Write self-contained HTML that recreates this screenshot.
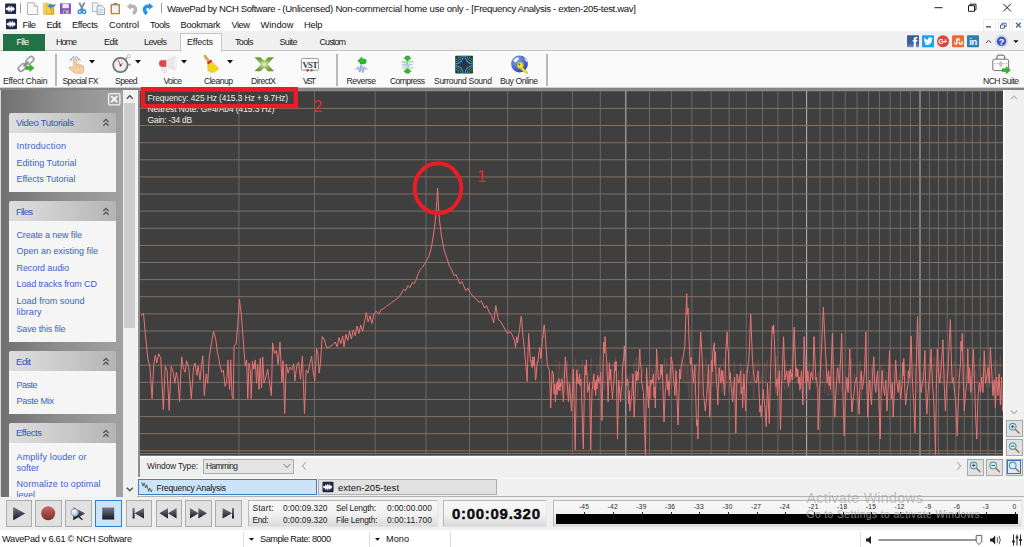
<!DOCTYPE html>
<html lang="en"><head><meta charset="utf-8"><title>WavePad</title>
<style>
html,body{margin:0;padding:0;overflow:hidden;}
body{width:1024px;height:547px;overflow:hidden;position:relative;background:#fff;font-family:"Liberation Sans",sans-serif;}
.a{position:absolute;}
.t{position:absolute;white-space:nowrap;}
svg{position:absolute;overflow:visible;}
.btn{position:absolute;background:#e1e1e1;border:1px solid #adadad;box-sizing:border-box;}
.grp{position:absolute;left:9px;width:107px;}
.gh{position:absolute;left:9px;width:107px;height:20px;background:linear-gradient(90deg,#dedede 0%,#cfcfcf 40%,#b4b4b4 100%);border-radius:2px 2px 0 0;}
.gb{position:absolute;left:9px;width:107px;background:#f5f5f5;}

</style></head>
<body>
<div class="a" style="left:0px;top:0px;width:1024px;height:31px;background:#ffffff;"></div><span id="t0" class="t" style="left:166.9px;top:2.00px;font-size:9.6px;line-height:13px;color:#111;font-family:'Liberation Sans',sans-serif;letter-spacing:-0.424px;">WavePad by NCH Software -</span><span id="t1" class="t" style="left:282.2px;top:2.00px;font-size:9.6px;line-height:13px;color:#111;font-family:'Liberation Sans',sans-serif;letter-spacing:-0.251px;">(Unlicensed) Non-commercial home use only -</span><span id="t2" class="t" style="left:471.3px;top:2.00px;font-size:9.6px;line-height:13px;color:#111;font-family:'Liberation Sans',sans-serif;letter-spacing:-0.335px;">[Frequency Analysis - exten-205-test.wav]</span><div class="a" style="left:20px;top:3px;width:1px;height:9.5px;background:#9c9c9c;"></div><div class="a" style="left:161.2px;top:3px;width:1px;height:9.5px;background:#9c9c9c;"></div><svg style="left:930px;top:0" width="94" height="18" viewBox="930 0 94 18"><g stroke="#1a1a1a" stroke-width="1" fill="none"><path d="M934.5 7.7h8"/><path d="M968.5 5.7h6v5.6h-6z M970 5.7v-1.5h6v5.6h-1.5"/><path d="M1003.3 3.8l7.6 7.6M1010.9 3.8l-7.6 7.6"/></g></svg><span id="t3" class="t" style="left:22.5px;top:19.00px;font-size:9.3px;line-height:13px;color:#111;font-family:'Liberation Sans',sans-serif;letter-spacing:-0.495px;">File</span><span id="t4" class="t" style="left:46.5px;top:19.00px;font-size:9.3px;line-height:13px;color:#111;font-family:'Liberation Sans',sans-serif;letter-spacing:-0.510px;">Edit</span><span id="t5" class="t" style="left:72.0px;top:19.00px;font-size:9.3px;line-height:13px;color:#111;font-family:'Liberation Sans',sans-serif;letter-spacing:-0.375px;">Effects</span><span id="t6" class="t" style="left:109.0px;top:19.00px;font-size:9.3px;line-height:13px;color:#111;font-family:'Liberation Sans',sans-serif;letter-spacing:0.003px;">Control</span><span id="t7" class="t" style="left:150.0px;top:19.00px;font-size:9.3px;line-height:13px;color:#111;font-family:'Liberation Sans',sans-serif;letter-spacing:-0.426px;">Tools</span><span id="t8" class="t" style="left:180.5px;top:19.00px;font-size:9.3px;line-height:13px;color:#111;font-family:'Liberation Sans',sans-serif;letter-spacing:-0.266px;">Bookmark</span><span id="t9" class="t" style="left:231.5px;top:19.00px;font-size:9.3px;line-height:13px;color:#111;font-family:'Liberation Sans',sans-serif;letter-spacing:-0.495px;">View</span><span id="t10" class="t" style="left:260.5px;top:19.00px;font-size:9.3px;line-height:13px;color:#111;font-family:'Liberation Sans',sans-serif;letter-spacing:-0.016px;">Window</span><span id="t11" class="t" style="left:304.0px;top:19.00px;font-size:9.3px;line-height:13px;color:#111;font-family:'Liberation Sans',sans-serif;letter-spacing:-0.208px;">Help</span><div class="a" style="left:983px;top:19px;width:12.5px;height:12.5px;background:#fff;border:1px solid #ececec;box-sizing:border-box;"></div><div class="a" style="left:997.5px;top:19px;width:12.5px;height:12.5px;background:#fff;border:1px solid #ececec;box-sizing:border-box;"></div><div class="a" style="left:1012px;top:19px;width:12.5px;height:12.5px;background:#fff;border:1px solid #ececec;box-sizing:border-box;"></div><svg style="left:980px;top:18px" width="44" height="14" viewBox="980 18 44 14"><g stroke="#4d6e94" fill="none"><path d="M986 26.8h5" stroke-width="1.6"/><path d="M1000.5 25h4v3.2h-4z M1002 25v-1.8h4.2v3.4h-1.7" stroke-width="1"/><path d="M1016 22.7l4.8 4.8M1020.8 22.7l-4.8 4.8" stroke-width="1.5"/></g></svg><div class="a" style="left:0px;top:31px;width:1024px;height:19.5px;background:#f0f0f0;"></div><div class="a" style="left:0px;top:50px;width:1024px;height:1px;background:#c6c6c6;"></div><div class="a" style="left:0px;top:51px;width:1024px;height:36.5px;background:#fafafa;"></div><div class="a" style="left:3px;top:33.5px;width:41.5px;height:17.5px;background:#217346;"></div><span id="t12" class="t" style="left:16.5px;top:36.00px;font-size:9px;line-height:13px;color:#ffffff;font-family:'Liberation Sans',sans-serif;letter-spacing:-0.672px;">File</span><div class="a" style="left:179.5px;top:33px;width:42.5px;height:18.5px;background:#fafafa;border:1px solid #c6c6c6;border-bottom:none;box-sizing:border-box;"></div><span id="t13" class="t" style="left:56.0px;top:36.00px;font-size:9px;line-height:13px;color:#1a1a1a;font-family:'Liberation Sans',sans-serif;letter-spacing:-1.005px;">Home</span><span id="t14" class="t" style="left:104.0px;top:36.00px;font-size:9px;line-height:13px;color:#1a1a1a;font-family:'Liberation Sans',sans-serif;letter-spacing:-0.505px;">Edit</span><span id="t15" class="t" style="left:144.0px;top:36.00px;font-size:9px;line-height:13px;color:#1a1a1a;font-family:'Liberation Sans',sans-serif;letter-spacing:-0.603px;">Levels</span><span id="t16" class="t" style="left:187.0px;top:36.00px;font-size:9px;line-height:13px;color:#1a1a1a;font-family:'Liberation Sans',sans-serif;letter-spacing:-0.227px;">Effects</span><span id="t17" class="t" style="left:235.0px;top:36.00px;font-size:9px;line-height:13px;color:#1a1a1a;font-family:'Liberation Sans',sans-serif;letter-spacing:-0.629px;">Tools</span><span id="t18" class="t" style="left:279.5px;top:36.00px;font-size:9px;line-height:13px;color:#1a1a1a;font-family:'Liberation Sans',sans-serif;letter-spacing:-0.629px;">Suite</span><span id="t19" class="t" style="left:319.5px;top:36.00px;font-size:9px;line-height:13px;color:#1a1a1a;font-family:'Liberation Sans',sans-serif;letter-spacing:-0.903px;">Custom</span><div class="a" style="left:54.5px;top:54px;width:2px;height:31.5px;background:#b9b9b9;"></div><div class="a" style="left:335.5px;top:54px;width:2px;height:31.5px;background:#b9b9b9;"></div><div class="a" style="left:545.5px;top:54px;width:2px;height:31.5px;background:#b9b9b9;"></div><span id="t20" class="t" style="left:3.0px;top:75.00px;font-size:8.6px;line-height:12px;color:#1e1e1e;font-family:'Liberation Sans',sans-serif;letter-spacing:-0.197px;">Effect Chain</span><span id="t21" class="t" style="left:62.5px;top:75.00px;font-size:8.6px;line-height:12px;color:#1e1e1e;font-family:'Liberation Sans',sans-serif;letter-spacing:-0.618px;">Special FX</span><span id="t22" class="t" style="left:115.0px;top:75.00px;font-size:8.6px;line-height:12px;color:#1e1e1e;font-family:'Liberation Sans',sans-serif;letter-spacing:-0.590px;">Speed</span><span id="t23" class="t" style="left:163.5px;top:75.00px;font-size:8.6px;line-height:12px;color:#1e1e1e;font-family:'Liberation Sans',sans-serif;letter-spacing:-0.633px;">Voice</span><span id="t24" class="t" style="left:204.0px;top:75.00px;font-size:8.6px;line-height:12px;color:#1e1e1e;font-family:'Liberation Sans',sans-serif;letter-spacing:-0.503px;">Cleanup</span><span id="t25" class="t" style="left:251.0px;top:75.00px;font-size:8.6px;line-height:12px;color:#1e1e1e;font-family:'Liberation Sans',sans-serif;letter-spacing:-0.531px;">DirectX</span><span id="t26" class="t" style="left:303.0px;top:75.00px;font-size:8.6px;line-height:12px;color:#1e1e1e;font-family:'Liberation Sans',sans-serif;letter-spacing:-1.859px;">VST</span><span id="t27" class="t" style="left:346.5px;top:75.00px;font-size:8.6px;line-height:12px;color:#1e1e1e;font-family:'Liberation Sans',sans-serif;letter-spacing:-0.417px;">Reverse</span><span id="t28" class="t" style="left:390.0px;top:75.00px;font-size:8.6px;line-height:12px;color:#1e1e1e;font-family:'Liberation Sans',sans-serif;letter-spacing:-0.596px;">Compress</span><span id="t29" class="t" style="left:434.0px;top:75.00px;font-size:8.6px;line-height:12px;color:#1e1e1e;font-family:'Liberation Sans',sans-serif;letter-spacing:-0.353px;">Surround Sound</span><span id="t30" class="t" style="left:500.0px;top:75.00px;font-size:8.6px;line-height:12px;color:#1e1e1e;font-family:'Liberation Sans',sans-serif;letter-spacing:-0.450px;">Buy Online</span><span id="t31" class="t" style="left:983.0px;top:75.00px;font-size:8.6px;line-height:12px;color:#1e1e1e;font-family:'Liberation Sans',sans-serif;letter-spacing:-0.574px;">NCH Suite</span><svg style="left:89px;top:60.3px" width="6" height="4" viewBox="0 0 6 4"><path d="M0 0h6l-3 3.4z" fill="#111"/></svg><svg style="left:135px;top:60.3px" width="6" height="4" viewBox="0 0 6 4"><path d="M0 0h6l-3 3.4z" fill="#111"/></svg><svg style="left:181px;top:60.3px" width="6" height="4" viewBox="0 0 6 4"><path d="M0 0h6l-3 3.4z" fill="#111"/></svg><svg style="left:226.5px;top:60.3px" width="6" height="4" viewBox="0 0 6 4"><path d="M0 0h6l-3 3.4z" fill="#111"/></svg><div class="a" style="left:0px;top:87.4px;width:1024px;height:1px;background:#cfcfcf;"></div><div class="a" style="left:0px;top:88.2px;width:1024px;height:1.9px;background:#858585;"></div><div class="a" style="left:0px;top:90px;width:123.5px;height:406.5px;background:#888;background:linear-gradient(90deg,#6f6f6f 0%,#8c8c8c 45%,#a2a2a2 100%);"></div><div class="a" style="left:0px;top:90px;width:1.2px;height:406.5px;background:#d8d8d8;"></div><svg style="left:107px;top:92px" width="15" height="15" viewBox="107 92 15 15"><rect x="108.6" y="93.6" width="11.3" height="11.3" rx="1.2" fill="#a4a4a4" stroke="#f2f2f2" stroke-width="1.3"/><path d="M111.2 96.2l6 6M117.2 96.2l-6 6" stroke="#fff" stroke-width="1.7"/></svg><div class="a" style="left:123px;top:90px;width:13.8px;height:406.5px;background:#f0f0f0;"></div><div class="a" style="left:124.3px;top:103px;width:11.1px;height:224.5px;background:#cdcdcd;"></div><svg style="left:123px;top:89px" width="14" height="408" viewBox="123 89 14 408"><g stroke="#505050" stroke-width="1.3" fill="none"><path d="M126.8 98.7l3-3 3 3"/><path d="M126.8 487.8l3 3 3-3"/></g></svg><div class="a" style="left:136.7px;top:90px;width:1.3px;height:387.5px;background:#f6f6f6;"></div><div class="a" style="left:137.9px;top:88.2px;width:2.1px;height:389.3px;background:#8c8c8c;"></div><div class="gh" style="top:112.8px"></div><div class="gb" style="top:132.8px;height:59.2px"></div><span id="t32" class="t" style="left:16.0px;top:116.00px;font-size:9.6px;line-height:13px;color:#3458c0;font-family:'Liberation Sans',sans-serif;letter-spacing:-0.378px;">Video Tutorials</span><svg style="left:101.5px;top:118.3px" width="8" height="9" viewBox="0 0 8 9"><path d="M1.400 4l2.600-2.600 2.600 2.600M1.400 7.700l2.600-2.600 2.600 2.600" stroke="#505050" stroke-width="1.250" fill="none"/></svg><span id="t33" class="t" style="left:16.5px;top:140.00px;font-size:9px;line-height:13px;color:#3a5fc8;font-family:'Liberation Sans',sans-serif;letter-spacing:0.224px;">Introduction</span><span id="t34" class="t" style="left:16.5px;top:157.00px;font-size:9px;line-height:13px;color:#3a5fc8;font-family:'Liberation Sans',sans-serif;letter-spacing:0.030px;">Editing Tutorial</span><span id="t35" class="t" style="left:16.5px;top:173.00px;font-size:9px;line-height:13px;color:#3a5fc8;font-family:'Liberation Sans',sans-serif;letter-spacing:-0.025px;">Effects Tutorial</span><div class="gh" style="top:201.3px"></div><div class="gb" style="top:221.3px;height:120.5px"></div><span id="t36" class="t" style="left:16.0px;top:205.00px;font-size:9.6px;line-height:13px;color:#3458c0;font-family:'Liberation Sans',sans-serif;letter-spacing:-0.816px;">Files</span><svg style="left:101.5px;top:206.8px" width="8" height="9" viewBox="0 0 8 9"><path d="M1.400 4l2.600-2.600 2.600 2.600M1.400 7.700l2.600-2.600 2.600 2.600" stroke="#505050" stroke-width="1.250" fill="none"/></svg><span id="t37" class="t" style="left:16.5px;top:229.00px;font-size:9px;line-height:13px;color:#3a5fc8;font-family:'Liberation Sans',sans-serif;letter-spacing:-0.128px;">Create a new file</span><span id="t38" class="t" style="left:16.5px;top:245.00px;font-size:9px;line-height:13px;color:#3a5fc8;font-family:'Liberation Sans',sans-serif;letter-spacing:-0.003px;">Open an existing file</span><span id="t39" class="t" style="left:16.5px;top:262.00px;font-size:9px;line-height:13px;color:#3a5fc8;font-family:'Liberation Sans',sans-serif;letter-spacing:-0.095px;">Record audio</span><span id="t40" class="t" style="left:16.5px;top:278.00px;font-size:9px;line-height:13px;color:#3a5fc8;font-family:'Liberation Sans',sans-serif;letter-spacing:-0.113px;">Load tracks from CD</span><span id="t41" class="t" style="left:16.5px;top:295.00px;font-size:9px;line-height:13px;color:#3a5fc8;font-family:'Liberation Sans',sans-serif;letter-spacing:0.032px;">Load from sound</span><span id="t42" class="t" style="left:16.5px;top:306.00px;font-size:9px;line-height:13px;color:#3a5fc8;font-family:'Liberation Sans',sans-serif;letter-spacing:0.081px;">library</span><span id="t43" class="t" style="left:16.5px;top:323.00px;font-size:9px;line-height:13px;color:#3a5fc8;font-family:'Liberation Sans',sans-serif;letter-spacing:-0.156px;">Save this file</span><div class="gh" style="top:351.3px"></div><div class="gb" style="top:371.3px;height:42.6px"></div><span id="t44" class="t" style="left:16.0px;top:355.00px;font-size:9.6px;line-height:13px;color:#3458c0;font-family:'Liberation Sans',sans-serif;letter-spacing:-0.516px;">Edit</span><svg style="left:101.5px;top:356.8px" width="8" height="9" viewBox="0 0 8 9"><path d="M1.400 4l2.600-2.600 2.600 2.600M1.400 7.700l2.600-2.600 2.600 2.600" stroke="#505050" stroke-width="1.250" fill="none"/></svg><span id="t45" class="t" style="left:16.5px;top:379.00px;font-size:9px;line-height:13px;color:#3a5fc8;font-family:'Liberation Sans',sans-serif;letter-spacing:-0.504px;">Paste</span><span id="t46" class="t" style="left:16.5px;top:395.00px;font-size:9px;line-height:13px;color:#3a5fc8;font-family:'Liberation Sans',sans-serif;letter-spacing:-0.252px;">Paste Mix</span><div class="gh" style="top:423px"></div><div class="gb" style="top:443px;height:53.5px"></div><span id="t47" class="t" style="left:16.0px;top:426.00px;font-size:9.6px;line-height:13px;color:#3458c0;font-family:'Liberation Sans',sans-serif;letter-spacing:-0.526px;">Effects</span><svg style="left:101.5px;top:428.5px" width="8" height="9" viewBox="0 0 8 9"><path d="M1.400 4l2.600-2.600 2.600 2.600M1.400 7.700l2.600-2.600 2.600 2.600" stroke="#505050" stroke-width="1.250" fill="none"/></svg><span id="t48" class="t" style="left:16.5px;top:451.00px;font-size:9px;line-height:13px;color:#3a5fc8;font-family:'Liberation Sans',sans-serif;letter-spacing:0.154px;">Amplify louder or</span><span id="t49" class="t" style="left:16.5px;top:462.00px;font-size:9px;line-height:13px;color:#3a5fc8;font-family:'Liberation Sans',sans-serif;letter-spacing:-0.003px;">softer</span><span id="t50" class="t" style="left:16.5px;top:478.00px;font-size:9px;line-height:13px;color:#3a5fc8;font-family:'Liberation Sans',sans-serif;letter-spacing:0.104px;">Normalize to optimal</span><div class="a" style="left:9px;top:489px;width:107px;height:7.5px;overflow:hidden"><span id="t51" class="t" style="left:7.5px;top:0.00px;font-size:9px;line-height:13px;color:#3a5fc8;font-family:'Liberation Sans',sans-serif;letter-spacing:0.000px;">level</span></div><svg style="left:0;top:0" width="1024" height="547" viewBox="0 0 1024 547"><rect x="140" y="90" width="863" height="1.2" fill="#8e8e8e"/><rect x="140" y="91.1" width="863" height="364.6" fill="#3f3f3f"/><path d="M238.9 91.1V455.7M314.5 91.1V455.7M375.2 91.1V455.7M426.0 91.1V455.7M469.5 91.1V455.7M507.7 91.1V455.7M541.7 91.1V455.7M572.4 91.1V455.7M600.3 91.1V455.7M649.5 91.1V455.7M671.4 91.1V455.7M691.9 91.1V455.7M711.1 91.1V455.7M729.2 91.1V455.7M746.3 91.1V455.7M762.5 91.1V455.7M777.9 91.1V455.7M792.6 91.1V455.7M820.0 91.1V455.7M832.9 91.1V455.7M845.2 91.1V455.7M857.1 91.1V455.7M868.5 91.1V455.7M879.5 91.1V455.7M890.1 91.1V455.7M900.4 91.1V455.7M910.4 91.1V455.7M929.4 91.1V455.7M938.5 91.1V455.7M947.3 91.1V455.7M955.9 91.1V455.7M964.2 91.1V455.7M972.3 91.1V455.7M980.3 91.1V455.7M988.0 91.1V455.7M995.5 91.1V455.7" stroke="#696969" stroke-width="1" fill="none"/><path d="M625.8 91.1V455.7M806.6 91.1V455.7M920.0 91.1V455.7" stroke="#b0b0b0" stroke-width="1.1" fill="none"/><path d="M140 108.4H1003M140 125.5H1003M140 142.7H1003M140 159.8H1003M140 176.9H1003M140 194.0H1003M140 211.1H1003M140 228.3H1003M140 245.4H1003M140 262.5H1003M140 279.6H1003M140 296.7H1003M140 313.9H1003M140 331.0H1003M140 348.1H1003M140 365.2H1003M140 382.3H1003M140 399.5H1003M140 416.6H1003M140 433.7H1003M140 450.8H1003M140 453.5H1003" stroke="#84705f" stroke-width="1" fill="none"/><path d="M556.0,359.6 L557.7,392.0 L559.2,360.8 L561.0,395.8 L562.5,367.1 L563.7,378.1 L565.1,368.9 L566.2,395.5 L567.4,361.1 L568.4,399.9 L570.2,375.3 L571.8,378.7 L573.1,366.9 L574.2,398.9 L575.6,359.4 L577.4,380.7 L579.3,366.0 L580.9,385.5 L582.4,360.1 L583.4,397.0 L584.6,373.2 L585.9,399.3 L587.7,372.6 L589.5,390.8 L591.2,358.7 L592.7,396.2 L593.9,376.3 L595.8,387.0 L597.2,365.9 L598.6,399.9 L599.9,356.6 L601.0,393.8 L603.0,366.9 L604.5,390.1 L606.3,360.9 L607.9,390.2 L609.5,360.0 L610.7,385.7 L612.6,363.6 L614.2,384.7 L615.3,357.4 L617.1,395.1 L618.5,371.0 L620.2,397.8 L622.1,365.0 L624.1,399.2 L625.7,375.4 L627.2,386.3 L628.4,375.3 L629.6,379.5 L631.4,373.0 L632.9,396.4 L633.9,361.7 L635.2,387.2 L636.4,357.5 L637.7,397.8 L639.7,372.4 L641.2,383.5 L643.2,367.6 L644.9,378.6 L646.1,374.4 L647.9,397.4 L649.5,365.4 L651.1,396.7 L652.4,367.8 L653.7,394.9 L654.7,371.1 L656.6,378.5 L658.2,370.2 L660.1,390.9 L661.3,364.9 L663.3,397.9 L664.4,358.1 L665.5,378.6 L667.0,359.1 L668.8,392.4 L670.0,367.9 L671.3,388.9 L672.5,359.7 L673.7,386.3 L675.4,368.1 L676.4,393.6 L678.3,373.0 L680.1,378.2 L681.6,357.4 L683.3,381.9 L685.0,361.6 L686.7,384.9 L687.8,364.6 L689.1,397.8 L690.4,367.1 L691.9,398.9 L693.0,369.2 L694.5,394.2 L696.5,362.8 L698.2,389.6 L699.8,357.4 L701.6,399.5 L702.9,363.0 L704.9,380.4 L706.0,357.6 L707.8,394.7 L709.3,369.7 L710.3,392.2 L711.7,367.4 L713.1,386.8 L714.4,357.1 L715.8,383.4 L717.5,374.0 L719.2,388.0 L720.5,364.5 L721.9,391.9 L723.9,357.9 L725.4,388.8 L727.1,375.6 L728.9,391.8 L730.6,370.7 L732.5,393.4 L734.2,361.4 L736.1,386.5 L737.7,374.1 L739.7,399.8 L740.7,362.9 L742.0,386.6 L743.1,368.2 L744.2,384.7 L746.2,372.3 L747.6,380.4 L749.6,371.5 L750.8,385.4 L752.4,371.0 L753.7,398.9 L755.0,361.6 L756.9,381.4 L758.5,360.4 L760.1,384.1 L761.5,376.7 L763.0,387.6 L764.6,362.2 L765.8,386.5 L767.0,360.1 L769.0,378.8 L770.8,376.6 L772.5,378.4 L774.0,356.9 L775.6,393.4 L776.9,356.2 L778.4,380.1 L779.7,366.0 L781.6,386.1 L782.7,373.4 L784.6,389.6 L785.6,360.1 L787.0,390.1 L788.2,373.7 L790.1,398.4 L792.0,356.4 L793.6,379.8 L795.5,372.4 L797.2,382.1 L798.3,373.9 L799.9,391.6 L801.4,373.6 L802.7,383.9 L804.0,362.6 L805.7,397.6 L806.7,357.5 L808.3,392.9 L809.4,361.9 L810.5,378.8 L812.0,371.0 L813.7,381.5 L814.8,376.5 L816.3,387.0 L818.0,372.0 L819.5,379.7 L821.3,360.7 L822.4,385.8 L823.9,369.8 L825.1,393.6 L826.6,359.6 L828.4,395.7 L830.3,370.9 L831.6,395.1 L833.5,367.7 L835.4,399.3 L836.8,376.7 L838.7,395.5 L839.7,363.7 L841.3,391.4 L843.1,370.2 L844.2,398.5 L845.8,375.4 L847.0,400.0 L848.5,373.1 L850.3,397.4 L851.6,357.8 L853.0,381.9 L854.6,373.9 L855.9,380.9 L857.0,365.3 L858.5,378.6 L860.2,360.6 L861.3,398.4 L862.8,375.7 L864.4,380.7 L865.6,365.3 L867.2,395.0 L869.0,370.3 L870.2,387.5 L871.6,366.8 L872.9,389.8 L874.3,356.8 L876.2,390.9 L878.0,372.2 L879.7,399.9 L881.1,364.7 L882.1,392.6 L883.7,368.7 L885.7,382.3 L886.9,372.2 L888.7,388.6 L889.8,364.1 L891.6,389.0 L893.0,364.6 L894.7,391.2 L896.4,375.0 L898.1,386.2 L899.4,373.2 L901.2,398.4 L902.4,374.6 L904.2,379.7 L905.6,369.9 L906.7,396.3 L908.0,371.0 L909.3,382.8 L910.5,366.9 L912.2,382.8 L913.9,363.4 L915.5,386.1 L916.7,359.1 L917.8,393.3 L919.2,358.7 L921.1,392.4 L922.1,371.9 L923.7,387.8 L925.2,377.2 L926.6,392.0 L928.2,364.0 L929.5,394.6 L931.2,366.1 L932.7,382.9 L934.5,356.4 L936.1,388.0 L937.3,368.9 L938.9,379.9 L940.4,359.6 L942.2,385.2 L943.5,360.7 L944.6,382.1 L945.7,369.7 L947.6,382.9 L948.7,367.8 L949.8,386.9 L951.6,360.5 L953.3,389.9 L954.4,361.3 L956.0,380.1 L957.2,368.7 L959.0,389.4 L960.6,356.2 L961.9,385.0 L963.9,363.9 L965.6,378.8 L967.1,375.6 L968.9,390.8 L970.1,376.4 L971.2,399.2 L973.0,371.8 L974.5,381.6 L975.8,370.6 L977.5,386.6 L979.3,357.2 L980.6,380.0 L981.9,373.4 L983.6,381.3 L985.0,358.5 L986.6,387.7 L987.9,364.2 L989.7,387.4 L991.4,369.8 L992.9,390.2 L994.2,360.4 L995.7,384.7 L997.1,360.1 L999.0,387.4 L1000.2,356.7 L1001.4,397.1" stroke="#e87474" stroke-width="0.8" fill="none" opacity="0.22"/><path d="M141.0,315.5 L143.5,313.3 L145.3,333.5 L147.8,358.3 L150.0,367.6 L152.1,398.7 L153.7,364.5 L155.3,355.2 L156.8,363.0 L158.7,353.7 L160.8,358.3 L163.3,409.6 L165.2,366.1 L167.1,370.7 L169.2,410.5 L171.1,366.1 L173.3,372.3 L174.8,383.2 L176.4,372.3 L177.9,380.1 L179.5,401.8 L181.7,356.8 L183.2,367.6 L185.1,372.3 L186.6,360.8 L188.8,367.6 L191.3,398.7 L193.5,367.6 L195.0,363.0 L196.9,375.4 L198.1,366.1 L200.0,380.1 L201.5,364.5 L202.8,355.8 L204.3,395.6 L206.2,373.9 L207.7,383.2 L209.3,356.8 L211.5,342.8 L213.6,331.3 L215.8,339.7 L217.4,352.1 L219.9,364.5 L221.7,372.3 L223.3,370.1 L225.1,386.3 L226.7,381.6 L227.9,359.9 L229.5,389.4 L230.7,359.9 L232.0,395.6 L233.2,398.7 L234.1,345.9 L236.0,344.3 L237.6,327.3 L239.4,299.3 L241.0,311.7 L242.5,330.4 L244.1,352.1 L245.3,366.1 L246.6,359.9 L247.8,398.7 L249.0,363.0 L250.3,370.7 L251.2,398.7 L252.5,361.4 L254.0,369.2 L255.3,359.9 L256.5,383.2 L257.7,364.5 L259.0,389.4 L260.2,358.3 L261.5,387.8 L262.7,356.8 L264.0,383.2 L265.8,377.0 L267.7,369.2 L269.5,383.2 L271.4,395.6 L272.6,342.8 L274.5,353.7 L276.4,350.6 L278.2,364.5 L280.0,342.1 L281.9,382.5 L283.1,360.7 L284.7,413.5 L286.2,363.9 L288.1,373.2 L289.9,367.0 L291.8,370.1 L293.7,363.9 L294.9,380.9 L296.8,365.4 L298.6,362.3 L300.5,379.4 L302.4,356.1 L304.5,413.5 L306.1,370.1 L308.0,373.2 L309.8,363.9 L311.7,356.1 L312.9,370.1 L314.8,380.9 L316.6,348.3 L317.9,354.5 L319.1,373.2 L320.4,363.9 L322.2,336.5 L324.1,339.0 L326.6,347.7 L329.7,346.8 L332.8,344.6 L335.3,342.1 L337.1,346.8 L339.0,337.5 L340.9,343.7 L342.7,335.9 L344.0,346.8 L345.8,334.3 L347.7,340.6 L349.6,331.2 L351.4,339.0 L353.3,329.7 L355.2,335.9 L357.0,326.0 L358.9,333.4 L360.7,325.0 L362.6,331.2 L364.5,321.9 L366.3,312.6 L368.2,321.9 L370.1,315.7 L371.9,323.5 L373.8,314.2 L376.3,311.1 L378.8,314.2 L381.2,309.5 L383.7,308.6 L386.2,306.4 L388.7,304.8 L391.8,302.4 L394.9,300.2 L398.0,298.0 L401.1,294.0 L403.6,289.3 L405.5,290.9 L408.0,285.6 L409.8,287.8 L412.3,282.5 L414.2,283.7 L416.0,280.0 L418.0,274.3 L420.2,269.3 L422.6,267.1 L425.8,261.9 L428.9,256.3 L430.7,250.1 L432.0,243.9 L433.2,236.1 L434.4,228.3 L435.4,219.0 L436.0,212.8 L436.9,200.4 L437.6,188.0 L438.1,200.0 L439.3,218.6 L441.2,234.2 L444.0,249.7 L447.1,259.0 L449.3,265.8 L451.7,269.9 L454.2,275.8 L456.1,274.5 L458.0,279.2 L459.8,283.9 L461.7,281.4 L464.2,287.0 L466.0,290.7 L467.9,288.2 L470.4,293.2 L473.5,296.9 L476.6,299.4 L479.1,302.5 L480.9,300.6 L482.8,304.0 L484.7,308.1 L486.5,305.6 L489.0,311.8 L491.5,315.5 L493.7,322.7 L495.8,305.6 L498.3,319.6 L500.8,321.7 L503.0,325.8 L505.2,329.8 L507.6,333.5 L510.1,331.7 L512.3,335.1 L514.5,340.4 L515.6,347.5 L516.7,336.6 L517.6,342.8 L518.7,333.5 L519.5,331.2 L520.4,321.2 L521.2,316.4 L521.65,318.0 L522.55,331.6 L523.0,336.6 L523.5,340.3 L524.4,349.3 L524.9,355.2 L525.55,362.1 L526.45,372.2 L527.1,381.6 L528.6,333.5 L530.5,361.4 L531.0,360.2 L531.9,367.1 L532.4,367.6 L532.85,356.8 L533.75,365.4 L534.2,356.8 L535.5,380.1 L535.95,378.9 L536.85,365.9 L537.3,361.4 L537.95,362.2 L538.85,352.3 L539.5,350.6 L539.85,347.4 L540.75,358.7 L541.1,358.3 L542.6,336.6 L542.95,337.5 L543.85,326.6 L544.2,324.8 L544.65,328.1 L545.55,339.7 L546.0,345.9 L547.3,364.5 L549.4,370.7 L550.7,408.0 L552.2,370.7 L553.5,373.9 L553.95,394.0 L554.85,384.1 L555.3,401.8 L556.6,383.2 L557.05,394.8 L557.95,381.2 L558.4,389.4 L558.9,378.5 L559.8,391.0 L560.3,383.2 L560.8,386.5 L561.7,378.8 L562.2,380.1 L563.4,401.8 L565.3,356.8 L567.1,380.1 L568.4,401.8 L569.6,383.2 L571.5,411.1 L573.4,369.2 L575.2,449.9 L576.5,373.9 L576.95,369.7 L577.85,383.9 L578.3,383.2 L579.6,373.9 L580.05,385.6 L580.95,379.3 L581.4,389.4 L583.3,449.0 L584.5,383.2 L585.0,365.6 L585.9,375.1 L586.4,359.9 L587.6,392.5 L589.5,383.2 L590.7,449.9 L592.0,389.4 L592.5,388.0 L593.4,377.8 L593.9,373.9 L594.35,389.9 L595.25,381.7 L595.7,395.6 L596.2,379.8 L597.1,388.9 L597.6,375.4 L599.4,383.2 L600.7,372.3 L601.9,420.4 L603.2,361.4 L603.65,342.0 L604.55,353.2 L605.0,336.6 L606.9,364.5 L608.1,401.8 L609.4,363.0 L609.85,379.6 L610.75,369.2 L611.2,383.2 L612.5,398.7 L612.95,391.6 L613.85,383.1 L614.3,373.9 L614.8,361.9 L615.7,371.1 L616.2,361.4 L617.5,439.1 L618.7,380.1 L620.6,401.8 L621.05,392.2 L621.95,385.3 L622.4,373.9 L622.9,364.4 L623.8,357.2 L624.3,345.9 L626.1,383.2 L626.6,385.6 L627.5,379.3 L628.0,380.1 L628.5,403.9 L629.4,390.6 L629.9,411.1 L631.7,395.6 L633.0,373.9 L634.2,417.3 L636.1,370.7 L636.6,380.9 L637.5,372.1 L638.0,380.1 L639.8,349.0 L640.3,361.7 L641.2,368.7 L641.7,383.2 L642.15,383.5 L643.05,390.5 L643.5,392.5 L645.4,454.6 L646.6,367.6 L648.5,408.0 L649.0,386.1 L649.9,398.8 L650.4,380.1 L650.85,384.7 L651.75,379.8 L652.2,383.2 L653.5,373.9 L653.95,397.6 L654.85,387.0 L655.3,408.0 L656.6,349.0 L658.4,380.1 L660.3,377.0 L660.8,364.0 L661.7,374.8 L662.2,364.5 L664.0,422.0 L665.3,389.4 L665.75,389.9 L666.65,376.7 L667.1,373.9 L667.6,390.1 L668.5,381.5 L669.0,395.6 L671.2,356.8 L671.65,360.3 L672.55,365.8 L673.0,370.7 L673.5,379.5 L674.4,385.3 L674.9,395.6 L676.1,370.7 L678.0,425.1 L679.3,383.2 L679.75,369.0 L680.65,379.2 L681.1,367.6 L683.0,358.3 L684.8,345.9 L686.7,293.7 L687.2,314.7 L688.1,308.0 L688.6,327.3 L689.8,356.8 L690.3,364.4 L691.2,357.2 L691.7,363.0 L693.5,383.2 L694.8,364.5 L696.0,404.9 L696.5,425.7 L697.4,419.8 L697.9,439.1 L699.1,367.6 L700.7,331.9 L702.2,358.3 L703.5,395.6 L703.95,397.4 L704.85,406.9 L705.3,411.1 L706.6,398.7 L707.05,389.1 L707.95,377.1 L708.4,364.5 L709.7,417.3 L710.9,383.2 L711.4,360.5 L712.3,371.9 L712.8,352.1 L714.3,342.8 L714.65,365.5 L715.55,351.5 L715.9,370.7 L716.4,381.5 L717.3,391.6 L717.8,404.9 L719.0,367.6 L720.9,383.2 L721.35,370.1 L722.25,381.1 L722.7,370.7 L724.6,395.6 L725.8,352.1 L727.1,331.9 L727.55,344.5 L728.45,352.9 L728.9,367.6 L729.4,379.7 L730.3,372.8 L730.8,383.2 L732.7,401.8 L734.5,377.0 L735.8,432.9 L737.0,373.9 L738.9,383.2 L740.7,370.7 L741.2,393.8 L742.1,386.7 L742.6,408.0 L743.9,373.9 L745.7,411.1 L747.0,370.7 L747.45,372.2 L748.35,362.4 L748.8,361.4 L750.7,314.2 L752.5,361.4 L754.4,380.1 L756.3,383.2 L758.1,370.7 L759.4,398.7 L759.85,412.2 L760.75,405.5 L761.2,417.3 L761.7,412.0 L762.6,398.2 L763.1,389.4 L765.0,408.0 L766.2,426.6 L767.5,383.2 L769.3,423.5 L770.6,370.7 L771.8,336.6 L772.3,326.4 L773.2,333.3 L773.7,324.8 L775.5,367.6 L776.0,386.6 L776.9,378.6 L777.4,395.6 L779.3,370.7 L780.5,429.8 L781.7,383.2 L783.6,336.6 L784.8,380.1 L786.7,370.7 L788.6,386.3 L789.05,370.8 L789.95,381.9 L790.4,369.2 L792.3,380.1 L794.2,327.3 L796.0,377.0 L796.5,367.8 L797.4,376.3 L797.9,369.2 L798.4,383.4 L799.3,376.9 L799.8,389.4 L800.25,388.7 L801.15,374.8 L801.6,370.7 L802.9,404.9 L804.1,336.6 L806.0,383.2 L806.45,369.5 L807.35,381.4 L807.8,370.7 L809.7,389.4 L810.9,372.3 L811.4,372.4 L812.3,378.5 L812.8,380.1 L814.0,336.6 L815.9,380.1 L816.4,377.4 L817.3,386.7 L817.8,386.3 L818.1,429.8 L820.6,367.6 L823.4,307.1 L825.5,352.1 L827.1,383.2 L828.6,370.7 L829.1,385.9 L830.0,376.5 L830.5,389.4 L832.4,333.5 L833.6,383.2 L834.8,417.3 L836.1,389.4 L837.3,367.6 L837.95,369.1 L838.85,379.2 L839.5,383.2 L841.7,333.5 L842.9,392.5 L844.2,436.0 L845.4,395.6 L846.6,380.1 L846.95,377.5 L847.85,391.6 L848.2,392.5 L849.8,349.0 L851.6,408.0 L852.1,412.0 L853.0,398.2 L853.5,398.7 L855.0,383.2 L856.6,377.0 L857.8,395.6 L859.1,414.2 L860.0,383.2 L861.2,370.7 L862.2,389.4 L863.4,383.2 L864.7,367.6 L865.9,331.9 L866.8,383.2 L867.8,417.3 L868.7,392.5 L869.6,380.1 L870.6,395.6 L871.5,404.9 L872.4,377.0 L873.7,356.8 L874.6,383.2 L875.8,392.5 L876.8,377.0 L877.7,370.7 L878.9,401.8 L880.2,439.1 L881.1,395.6 L882.0,370.7 L883.3,386.3 L884.5,395.6 L885.8,380.1 L887.0,411.1 L888.3,383.2 L889.5,350.6 L890.4,383.2 L891.4,398.7 L892.3,383.2 L893.2,417.3 L894.5,386.3 L895.7,359.9 L897.0,383.2 L898.2,392.5 L899.4,380.1 L900.7,398.7 L902.2,383.2 L902.55,362.5 L903.45,375.7 L903.8,358.3 L904.7,389.4 L905.7,404.9 L906.9,392.5 L908.1,383.2 L908.45,370.6 L909.35,378.3 L909.7,367.6 L911.2,336.0 L912.2,377.0 L913.1,392.5 L914.0,408.0 L915.0,432.9 L916.2,367.6 L917.5,316.4 L918.4,352.1 L919.3,370.7 L920.2,383.2 L921.2,392.5 L922.4,383.2 L923.7,377.0 L924.9,350.6 L925.8,389.4 L926.8,414.2 L928.0,392.5 L929.3,380.1 L930.2,367.6 L931.1,349.0 L932.4,383.2 L933.6,398.7 L934.5,420.4 L935.5,454.6 L936.4,383.2 L937.3,349.0 L938.6,373.9 L939.8,383.2 L941.4,364.5 L942.9,339.7 L944.2,383.2 L945.4,411.1 L946.6,386.3 L947.9,370.7 L949.1,345.9 L950.4,319.5 L951.3,358.3 L952.2,383.2 L953.5,377.0 L954.7,392.5 L956.0,408.0 L957.2,436.0 L959.1,380.1 L960.6,361.4 L960.95,341.2 L961.85,351.2 L962.2,333.5 L963.4,383.2 L964.3,411.1 L965.6,392.5 L966.8,383.2 L967.8,349.0 L968.7,383.2 L969.6,367.6 L970.9,392.5 L972.1,373.9 L973.4,349.0 L974.6,383.2 L975.8,420.4 L976.8,439.1 L978.0,395.6 L979.3,383.2 L980.5,392.5 L981.7,377.0 L983.0,392.5 L984.2,350.6 L985.5,383.2 L986.7,377.0 L988.0,367.6 L989.2,383.2 L990.4,347.5 L991.7,370.7 L992.9,395.6 L994.2,380.1 L995.4,408.0 L996.6,377.0 L997.9,395.6 L999.1,373.9 L1000.4,404.9 L1001.6,377.0 L1002.5,411.1" stroke="#e87474" stroke-width="1" fill="none" stroke-linejoin="round"/><rect x="143.050" y="89.150" width="152.700" height="16.900" fill="none" stroke="#ea1d27" stroke-width="4.300"/><ellipse cx="438" cy="188.2" rx="23.3" ry="24.9" fill="none" stroke="#ea1d27" stroke-width="4"/></svg><span id="t52" class="t" style="left:147.5px;top:92.00px;font-size:8.4px;line-height:12px;color:#efefe6;font-family:'Liberation Sans',sans-serif;letter-spacing:-0.089px;">Frequency: 425 Hz (415.3 Hz + 9.7Hz)</span><span id="t53" class="t" style="left:147.5px;top:103.00px;font-size:8.4px;line-height:12px;color:#efefe6;font-family:'Liberation Sans',sans-serif;letter-spacing:-0.048px;">Nearest Note: G#4/Ab4 (415.3 Hz)</span><span id="t54" class="t" style="left:147.5px;top:114.00px;font-size:8.4px;line-height:12px;color:#efefe6;font-family:'Liberation Sans',sans-serif;letter-spacing:-0.230px;">Gain: -34 dB</span><div class="a" style="left:140.900px;top:103.900px;width:157px;height:4.300px;background:#ea1d27"></div><span id="t55" class="t" style="left:313.0px;top:95.00px;font-size:16.5px;line-height:23px;color:#ea2630;font-family:'Liberation Sans',sans-serif;letter-spacing:0.000px;">2</span><span id="t56" class="t" style="left:477.0px;top:165.00px;font-size:16.5px;line-height:23px;color:#ea2630;font-family:'Liberation Sans',sans-serif;letter-spacing:0.000px;">1</span><div class="a" style="left:1003px;top:90px;width:21px;height:366px;background:#f0f0f0;"></div><div class="a" style="left:1003px;top:90px;width:1.8px;height:366px;background:#fbfbfb;"></div><svg style="left:1003px;top:89px" width="21" height="330" viewBox="1003 89 21 330"><g stroke="#b4b4b4" stroke-width="1.2" fill="none"><path d="M1010.8 99.2l3.2-3.2 3.2 3.2"/><path d="M1010.8 410.5l3.2 3.2 3.2-3.2"/></g></svg><div class="a" style="left:140px;top:455.7px;width:884px;height:22.1px;background:#f0f0f0;"></div><div class="a" style="left:140px;top:455.7px;width:884px;height:2px;background:#ffffff;"></div><span id="t57" class="t" style="left:147.0px;top:460.00px;font-size:8.4px;line-height:12px;color:#1e1e1e;font-family:'Liberation Sans',sans-serif;letter-spacing:-0.132px;">Window Type:</span><div class="a" style="left:203px;top:458.5px;width:90.5px;height:15.5px;background:#e4e4e4;border:1px solid #adadad;box-sizing:border-box;"></div><span id="t58" class="t" style="left:206.0px;top:460.00px;font-size:8.4px;line-height:12px;color:#1e1e1e;font-family:'Liberation Sans',sans-serif;letter-spacing:-0.641px;">Hamming</span><svg style="left:283px;top:463px" width="8" height="6" viewBox="0 0 8 6"><path d="M0.8 1.2l3.2 3.2 3.2-3.2" stroke="#5a5a5a" stroke-width="0.9" fill="none"/></svg><svg style="left:301px;top:461px" width="6" height="10" viewBox="0 0 6 10"><path d="M4.8 1.2l-3.4 3.8 3.4 3.8" stroke="#b4b4b4" stroke-width="1.2" fill="none"/></svg><svg style="left:956px;top:461px" width="6" height="10" viewBox="0 0 6 10"><path d="M1.2 1.2l3.4 3.8-3.4 3.8" stroke="#b4b4b4" stroke-width="1.2" fill="none"/></svg><div class="btn" style="left:1005.5px;top:419.5px;width:17px;height:17px;border-color:#a8a8a8;"></div><div class="btn" style="left:1005.5px;top:438.5px;width:17px;height:17px;border-color:#a8a8a8;"></div><div class="btn" style="left:966.5px;top:458.5px;width:17px;height:17px;border-color:#a8a8a8;"></div><div class="btn" style="left:986px;top:458.5px;width:17px;height:17px;border-color:#a8a8a8;"></div><div class="btn" style="left:1005.5px;top:458.5px;width:17px;height:17px;border-color:#a8a8a8;"></div><div class="a" style="left:1007.3px;top:460.3px;width:13.4px;height:13.4px;background:#dfe8f4;border:1px solid #3b6fc0;box-sizing:border-box;"></div><div class="a" style="left:137px;top:477.8px;width:887px;height:19px;background:#f0f0f0;"></div><div class="a" style="left:137px;top:477.8px;width:887px;height:1px;background:#fbfbfb;"></div><div class="a" style="left:138px;top:479px;width:179px;height:16px;background:#cce4f7;border:1px solid #3a7fc0;box-sizing:border-box;"></div><span id="t59" class="t" style="left:156.5px;top:482.00px;font-size:8.5px;line-height:12px;color:#111;font-family:'Liberation Sans',sans-serif;letter-spacing:-0.247px;">Frequency Analysis</span><svg style="left:141px;top:481px" width="14" height="12" viewBox="0 0 14 12"><path d="M0.5 1.2l1.6 4 1-3.4 1.6 5.2 1-3.2 2 6.6 1-3.4 1.6 4 .8-2.4" stroke="#555" stroke-width="0.9" fill="none"/></svg><div class="a" style="left:318.3px;top:479px;width:178.5px;height:16px;background:#e1e1e1;border:1px solid #adadad;box-sizing:border-box;"></div><span id="t60" class="t" style="left:338.0px;top:481.00px;font-size:9.4px;line-height:13px;color:#111;font-family:'Liberation Sans',sans-serif;letter-spacing:0.082px;">exten-205-test</span><div class="a" style="left:137px;top:496.3px;width:887px;height:1px;background:#b2b2b2;"></div><div class="a" style="left:0px;top:497.3px;width:1024px;height:33px;background:#f0f0f0;"></div><div class="btn" style="left:5.5px;top:500px;width:26.7px;height:26.7px;"></div><div class="btn" style="left:35px;top:500px;width:26.7px;height:26.7px;"></div><div class="btn" style="left:65px;top:500px;width:26.7px;height:26.7px;"></div><div class="btn" style="left:95px;top:500px;width:26.7px;height:26.7px;background:#cce4f7;border-color:#2f7fd0;"></div><div class="btn" style="left:125.5px;top:500px;width:26.7px;height:26.7px;"></div><div class="btn" style="left:155.5px;top:500px;width:26.7px;height:26.7px;"></div><div class="btn" style="left:185px;top:500px;width:26.7px;height:26.7px;"></div><div class="btn" style="left:215px;top:500px;width:26.7px;height:26.7px;"></div><div class="a" style="left:247.5px;top:500px;width:190px;height:26.5px;box-sizing:border-box;border:1px solid #b9b9b9;border-right-color:#e8e8e8;border-bottom-color:#e0e0e0;background:linear-gradient(#f8f8f8 0%,#f1f1f1 55%,#dadada 100%);border-radius:1px;"></div><div class="a" style="left:443px;top:500px;width:104px;height:26.5px;box-sizing:border-box;border:1px solid #b9b9b9;border-right-color:#e8e8e8;border-bottom-color:#e0e0e0;background:linear-gradient(#f8f8f8 0%,#f1f1f1 55%,#dadada 100%);border-radius:1px;"></div><div class="a" style="left:553px;top:500px;width:469px;height:26.5px;box-sizing:border-box;border:1px solid #b9b9b9;border-right-color:#e8e8e8;border-bottom-color:#e0e0e0;background:linear-gradient(#f8f8f8 0%,#f1f1f1 55%,#dadada 100%);border-radius:1px;"></div><span id="t61" class="t" style="left:252.5px;top:502.00px;font-size:8.4px;line-height:12px;color:#222;font-family:'Liberation Sans',sans-serif;letter-spacing:0.197px;">Start:</span><span id="t62" class="t" style="left:252.5px;top:514.00px;font-size:8.4px;line-height:12px;color:#222;font-family:'Liberation Sans',sans-serif;letter-spacing:-0.411px;">End:</span><span id="t63" class="t" style="left:283.0px;top:502.00px;font-size:8.4px;line-height:12px;color:#222;font-family:'Liberation Sans',sans-serif;letter-spacing:0.025px;">0:00:09.320</span><span id="t64" class="t" style="left:283.0px;top:514.00px;font-size:8.4px;line-height:12px;color:#222;font-family:'Liberation Sans',sans-serif;letter-spacing:0.025px;">0:00:09.320</span><span id="t65" class="t" style="left:336.0px;top:502.00px;font-size:8.4px;line-height:12px;color:#222;font-family:'Liberation Sans',sans-serif;letter-spacing:-0.237px;">Sel Length:</span><span id="t66" class="t" style="left:336.0px;top:514.00px;font-size:8.4px;line-height:12px;color:#222;font-family:'Liberation Sans',sans-serif;letter-spacing:-0.206px;">File Length:</span><span id="t67" class="t" style="left:387.0px;top:502.00px;font-size:8.4px;line-height:12px;color:#222;font-family:'Liberation Sans',sans-serif;letter-spacing:0.075px;">0:00:00.000</span><span id="t68" class="t" style="left:387.0px;top:514.00px;font-size:8.4px;line-height:12px;color:#222;font-family:'Liberation Sans',sans-serif;letter-spacing:0.138px;">0:00:11.700</span><span id="t69" class="t" style="left:452.0px;top:503.00px;font-size:15px;line-height:21px;color:#0a0a0a;font-family:'Liberation Sans',sans-serif;font-weight:bold;letter-spacing:0.709px;-webkit-text-stroke:0.4px #0a0a0a;">0:00:09.320</span><div class="a" style="left:556px;top:514px;width:461.5px;height:10px;background:#000;"></div><div class="a" style="left:584.0px;top:511.8px;width:1px;height:2.4px;background:#222;"></div><span id="t70" class="t" style="left:578.9px;top:502.00px;font-size:6.6px;line-height:9px;color:#2a2a2a;font-family:'Liberation Sans',sans-serif;letter-spacing:0.234px;">-45</span><div class="a" style="left:613.0px;top:511.8px;width:1px;height:2.4px;background:#222;"></div><span id="t71" class="t" style="left:607.6px;top:502.00px;font-size:6.6px;line-height:9px;color:#2a2a2a;font-family:'Liberation Sans',sans-serif;letter-spacing:0.234px;">-42</span><div class="a" style="left:641.5px;top:511.8px;width:1px;height:2.4px;background:#222;"></div><span id="t72" class="t" style="left:636.3px;top:502.00px;font-size:6.6px;line-height:9px;color:#2a2a2a;font-family:'Liberation Sans',sans-serif;letter-spacing:0.234px;">-39</span><div class="a" style="left:670.5px;top:511.8px;width:1px;height:2.4px;background:#222;"></div><span id="t73" class="t" style="left:665.0px;top:502.00px;font-size:6.6px;line-height:9px;color:#2a2a2a;font-family:'Liberation Sans',sans-serif;letter-spacing:0.234px;">-36</span><div class="a" style="left:699.0px;top:511.8px;width:1px;height:2.4px;background:#222;"></div><span id="t74" class="t" style="left:693.7px;top:502.00px;font-size:6.6px;line-height:9px;color:#2a2a2a;font-family:'Liberation Sans',sans-serif;letter-spacing:0.234px;">-33</span><div class="a" style="left:727.5px;top:511.8px;width:1px;height:2.4px;background:#222;"></div><span id="t75" class="t" style="left:722.4px;top:502.00px;font-size:6.6px;line-height:9px;color:#2a2a2a;font-family:'Liberation Sans',sans-serif;letter-spacing:0.234px;">-30</span><div class="a" style="left:756.5px;top:511.8px;width:1px;height:2.4px;background:#222;"></div><span id="t76" class="t" style="left:751.0px;top:502.00px;font-size:6.6px;line-height:9px;color:#2a2a2a;font-family:'Liberation Sans',sans-serif;letter-spacing:0.234px;">-27</span><div class="a" style="left:785.0px;top:511.8px;width:1px;height:2.4px;background:#222;"></div><span id="t77" class="t" style="left:779.7px;top:502.00px;font-size:6.6px;line-height:9px;color:#2a2a2a;font-family:'Liberation Sans',sans-serif;letter-spacing:0.234px;">-24</span><div class="a" style="left:813.5px;top:511.8px;width:1px;height:2.4px;background:#222;"></div><span id="t78" class="t" style="left:808.4px;top:502.00px;font-size:6.6px;line-height:9px;color:#2a2a2a;font-family:'Liberation Sans',sans-serif;letter-spacing:0.234px;">-21</span><div class="a" style="left:842.5px;top:511.8px;width:1px;height:2.4px;background:#222;"></div><span id="t79" class="t" style="left:837.1px;top:502.00px;font-size:6.6px;line-height:9px;color:#2a2a2a;font-family:'Liberation Sans',sans-serif;letter-spacing:0.234px;">-18</span><div class="a" style="left:871.0px;top:511.8px;width:1px;height:2.4px;background:#222;"></div><span id="t80" class="t" style="left:865.8px;top:502.00px;font-size:6.6px;line-height:9px;color:#2a2a2a;font-family:'Liberation Sans',sans-serif;letter-spacing:0.234px;">-15</span><div class="a" style="left:900.0px;top:511.8px;width:1px;height:2.4px;background:#222;"></div><span id="t81" class="t" style="left:894.5px;top:502.00px;font-size:6.6px;line-height:9px;color:#2a2a2a;font-family:'Liberation Sans',sans-serif;letter-spacing:0.234px;">-12</span><div class="a" style="left:928.5px;top:511.8px;width:1px;height:2.4px;background:#222;"></div><span id="t82" class="t" style="left:925.0px;top:502.00px;font-size:6.6px;line-height:9px;color:#2a2a2a;font-family:'Liberation Sans',sans-serif;letter-spacing:0.425px;">-9</span><div class="a" style="left:957.0px;top:511.8px;width:1px;height:2.4px;background:#222;"></div><span id="t83" class="t" style="left:953.7px;top:502.00px;font-size:6.6px;line-height:9px;color:#2a2a2a;font-family:'Liberation Sans',sans-serif;letter-spacing:0.425px;">-6</span><div class="a" style="left:986.0px;top:511.8px;width:1px;height:2.4px;background:#222;"></div><span id="t84" class="t" style="left:982.4px;top:502.00px;font-size:6.6px;line-height:9px;color:#2a2a2a;font-family:'Liberation Sans',sans-serif;letter-spacing:0.425px;">-3</span><div class="a" style="left:1014.5px;top:511.8px;width:1px;height:2.4px;background:#222;"></div><span id="t85" class="t" style="left:1012.5px;top:502.00px;font-size:6.6px;line-height:9px;color:#2a2a2a;font-family:'Liberation Sans',sans-serif;letter-spacing:-0.072px;">0</span><span id="t86" class="t" style="left:806.5px;top:488.00px;font-size:14.2px;line-height:20px;color:rgba(150,150,150,0.55);font-family:'Liberation Sans',sans-serif;letter-spacing:0.302px;">Activate Windows</span><span id="t87" class="t" style="left:806.5px;top:508.00px;font-size:10.3px;line-height:14px;color:rgba(160,160,160,0.8);font-family:'Liberation Sans',sans-serif;letter-spacing:0.410px;">Go to Settings to activate Windows.</span><div class="a" style="left:0px;top:530.2px;width:1024px;height:16.8px;background:#ffffff;"></div><span id="t88" class="t" style="left:2.0px;top:533.00px;font-size:9.2px;line-height:13px;color:#111;font-family:'Liberation Sans',sans-serif;letter-spacing:-0.274px;">WavePad v 6.61 &copy; NCH Software</span><span id="t89" class="t" style="left:260.0px;top:533.00px;font-size:9.2px;line-height:13px;color:#111;font-family:'Liberation Sans',sans-serif;letter-spacing:-0.479px;">Sample Rate: 8000</span><span id="t90" class="t" style="left:386.0px;top:533.00px;font-size:9.2px;line-height:13px;color:#111;font-family:'Liberation Sans',sans-serif;letter-spacing:0.005px;">Mono</span><div class="a" style="left:243px;top:532px;width:1px;height:15px;background:#dcdcdc;"></div><div class="a" style="left:368.5px;top:532px;width:1px;height:15px;background:#dcdcdc;"></div><div class="a" style="left:450px;top:532px;width:1px;height:15px;background:#dcdcdc;"></div><div class="a" style="left:859.7px;top:532px;width:1px;height:15px;background:#dcdcdc;"></div><svg style="left:249px;top:537.6px" width="5" height="3" viewBox="0 0 5 3"><path d="M0 0h5l-2.5 2.8z" fill="#111"/></svg><svg style="left:375px;top:537.6px" width="5" height="3" viewBox="0 0 5 3"><path d="M0 0h5l-2.5 2.8z" fill="#111"/></svg><svg style="left:860px;top:532px" width="164" height="15" viewBox="860 532 164 15"><path d="M866 538.6h2l3-2.6v8l-3-2.6h-2z" fill="#222"/><path d="M878.5 540h100" stroke="#333" stroke-width="1"/><path d="M976.2 535.4h5.6v6.4l-2.8 2.8-2.8-2.8z" fill="#f4f4f4" stroke="#555" stroke-width="0.9"/><path d="M990 538.4h2.2l3-2.8v8.8l-3-2.8h-2.200z" fill="#222"/><path d="M997 537.2q1.600 2.8 0 5.600M999 535.800q2.600 4.200 0 8.400" stroke="#444" stroke-width="0.9" fill="none"/><path d="M1013.500 534.500v11M1017 534.500v11M1020.500 534.500v11" stroke="#222" stroke-width="1"/><path d="M1012.200 541.500h2.600M1015.700 537.500h2.600M1019.200 540h2.600" stroke="#222" stroke-width="1.800"/></svg><svg style="left:0;top:0" width="1024" height="547" viewBox="0 0 1024 547"><defs>
<linearGradient id="gd" x1="0" y1="0" x2="0" y2="1"><stop offset="0" stop-color="#77798a"/><stop offset="1" stop-color="#15161f"/></linearGradient>
<linearGradient id="gr" x1="0" y1="0" x2="0" y2="1"><stop offset="0" stop-color="#c96b68"/><stop offset="1" stop-color="#7d2a26"/></linearGradient>
<linearGradient id="gf" x1="0" y1="0" x2="1" y2="0"><stop offset="0" stop-color="#f7dc70"/><stop offset="1" stop-color="#e6b32e"/></linearGradient>
<radialGradient id="gx" cx="0.5" cy="0.5" r="0.5"><stop offset="0" stop-color="#e6f2cf"/><stop offset="0.6" stop-color="#8db84a"/><stop offset="1" stop-color="#6f9a33"/></radialGradient>
<radialGradient id="gg" cx="0.35" cy="0.3" r="0.8"><stop offset="0" stop-color="#7fa6ee"/><stop offset="1" stop-color="#2a3fb0"/></radialGradient>
<radialGradient id="gl" cx="0.4" cy="0.35" r="0.7"><stop offset="0" stop-color="#ffffff"/><stop offset="1" stop-color="#9fb8e8"/></radialGradient>
<linearGradient id="gfb" x1="0" y1="0" x2="0" y2="1"><stop offset="0" stop-color="#3b5998"/><stop offset="0.7" stop-color="#45629f"/><stop offset="1" stop-color="#8194c0"/></linearGradient>
<clipPath id="sq"><rect x="455.200" y="55.800" width="17.800" height="17.800"/></clipPath>
</defs><g transform="translate(5.1 3.600)"><rect x="0" y="0" width="11" height="10.5" rx="0.8" fill="#1f2848"/><path d="M0.500 5.300l0.900-1.300 0.800 0.600 0.900-2.400 0.900 2.200 0.800-2.800 0.900 2.700 0.900-2.500 0.900 2.300 0.800-0.900 0.700 1.100 0.500 0.700v0.600l-0.500 0.700-0.700 1.100-0.800-0.900-0.900 2.300-0.900-2.500-0.900 2.700-0.800-2.800-0.900 2.200-0.900-2.400-0.800 0.600-0.900-1.300z" fill="#fff"/></g><g transform="translate(6 18.800)"><rect x="0" y="0" width="11" height="10.5" rx="0.8" fill="#1f2848"/><path d="M0.500 5.300l0.900-1.300 0.800 0.600 0.900-2.400 0.900 2.200 0.800-2.800 0.900 2.700 0.900-2.500 0.900 2.300 0.800-0.900 0.700 1.100 0.500 0.700v0.600l-0.500 0.700-0.700 1.100-0.800-0.900-0.900 2.300-0.900-2.500-0.900 2.700-0.800-2.800-0.900 2.200-0.900-2.400-0.800 0.600-0.900-1.300z" fill="#fff"/></g><g transform="translate(322.500 481.800)"><rect x="0" y="0" width="11" height="10.5" rx="0.8" fill="#1f2848"/><path d="M0.500 5.300l0.900-1.300 0.800 0.600 0.900-2.400 0.900 2.200 0.800-2.800 0.900 2.700 0.900-2.500 0.900 2.300 0.800-0.900 0.700 1.100 0.500 0.700v0.600l-0.500 0.700-0.700 1.100-0.800-0.900-0.900 2.300-0.900-2.500-0.900 2.700-0.800-2.800-0.900 2.200-0.900-2.400-0.800 0.600-0.900-1.300z" fill="#fff"/></g><path d="M27.500 2.800h6.600l3.600 3.600v8.100h-10.200z" fill="#f8f8f8" stroke="#a9a9a9" stroke-width="0.900"/><path d="M34.100 2.800v3.600h3.600" fill="#e2e2e2" stroke="#a9a9a9" stroke-width="0.700"/><path d="M43.600 3.200h4.600l1.200 1.400h4.600v9.800h-10.400z" fill="url(#gf)" stroke="#d4a52a" stroke-width="0.600"/><path d="M46.300 5.400l4.700 1v8l-4.700-1z" fill="#f3cf55" stroke="#c9992a" stroke-width="0.500"/><path d="M56.200 4.200c-2.200 2.800-3.800 3.200-5.200 3v1.800l-3.300-2.900 3.300-2.900v1.600c1.700 0.300 3.300 0 5.200-0.600z" fill="#2b8ce0"/><rect x="60" y="3.200" width="11" height="10.800" rx="0.700" fill="#8259b9"/><rect x="62.400" y="3.600" width="6.400" height="4.600" fill="#ece6f3"/><rect x="63" y="10.300" width="5.600" height="3.500" fill="#b9b2c4"/><rect x="64" y="11" width="1.600" height="2.600" fill="#6a5a8a"/><path d="M79.300 2.600l3.800 7.600M84.500 2.600l-3.800 7.600" stroke="#7d8ca0" stroke-width="1.900" fill="none"/><circle cx="79.800" cy="11.800" r="1.700" fill="none" stroke="#2b8fe2" stroke-width="1.500"/><circle cx="84" cy="11.800" r="1.700" fill="none" stroke="#2b8fe2" stroke-width="1.500"/><path d="M92.300 2.800h5l2.400 2.400v6.400h-7.400z" fill="#f2f6fb" stroke="#9a9fa8" stroke-width="0.800"/><path d="M97.200 5.800h5l2.400 2.400v6.300h-7.400z" fill="#e9f1fb" stroke="#8a9098" stroke-width="0.800"/><path d="M98.600 9.500h4.500M98.600 11h4.500M98.600 12.500h4.500" stroke="#9fc0e6" stroke-width="0.600"/><rect x="110.600" y="4" width="9.400" height="10.200" rx="0.800" fill="#b9823e"/><rect x="112" y="5.400" width="6.600" height="7.600" fill="#eef3fa"/><rect x="113.200" y="3" width="4.200" height="2" rx="0.600" fill="#8a8a8a"/><path d="M130.400 6.400C134.400 5.700 136 8 135.500 10.200C135.200 11.700 134.400 12.800 133.200 13.800" stroke="#b4b4b4" stroke-width="3.500" fill="none"/><path d="M126.800 6.400L131 3V9.800z" fill="#b4b4b4"/><path d="M149.600 6.400C145.600 5.700 144 8 144.500 10.200C144.800 11.700 145.600 12.800 146.800 13.800" stroke="#1f96ea" stroke-width="3.500" fill="none"/><path d="M153.200 6.400L149 3V9.800z" fill="#1f96ea"/><g transform="rotate(-43 26 64)" fill="none"><rect x="16.600" y="61.500" width="8.600" height="5" rx="2.500" stroke="#9a9a9a" stroke-width="1.800"/><rect x="27" y="61.500" width="8.600" height="5" rx="2.500" stroke="#a4a4a4" stroke-width="1.800"/><path d="M23.400 64h5.400" stroke="#8c8c8c" stroke-width="1.800" stroke-linecap="round"/><path d="M18 62.300h5.600M28.400 62.300h5.600" stroke="#e8e8e8" stroke-width="0.700"/></g><g transform="translate(25.800 64.400)"><path d="M0 2.200h4v-2.200l4.200 3.600-4.200 3.600v-2.200h-4z" fill="#35b72f" stroke="#1f8a1c" stroke-width="0.500"/></g><path d="M69.200 60.600q1.300-2.600 2.600 0M71.400 59.800q1.400-4.400 3.200-2.600M75.400 57.200q1.800-1.800 3.200 2.600M78.200 60.600q1.300-2.600 2.600 0" stroke="#5a86cf" stroke-width="0.800" fill="none"/><path d="M73.400 58.800q1.700-1.600 3.300 0v6l1.400-0.600q1.200-0.100 1.500 0.800l1.200-0.300q1.200 0 1.500 1l0.400 0.100q1 0.200 1 1.400v4.300q-0.200 1.600-2 1.800h-6.200q-1.500-0.200-2.600-1.600l-3.800-3.400q-0.600-1.300 0.800-1.600l3.500 1.200z" fill="#f2cfa0" stroke="#d2a573" stroke-width="0.600"/><path d="M76.700 64.800v2.600M79.600 65.200v2.400M82.300 66v2" stroke="#d2a573" stroke-width="0.500"/><path d="M125.600 59.200l2.600-2.600" stroke="#9a9a9a" stroke-width="1.400"/><circle cx="128.800" cy="56.200" r="1.700" fill="#f4f4f4" stroke="#b4b4b4" stroke-width="0.700"/><path d="M127.800 64.600h3" stroke="#9a9a9a" stroke-width="1.600"/><circle cx="120.400" cy="65" r="7.200" fill="#f1f1f1" stroke="#6f6f6f" stroke-width="1.700"/><circle cx="120.400" cy="65" r="5.800" fill="none" stroke="#d0d0d0" stroke-width="0.600"/><path d="M120.400 65l-2.300-4.800" stroke="#d23a3a" stroke-width="0.900"/><path d="M120.400 65l2.600-2.200" stroke="#555" stroke-width="0.600"/><circle cx="120.600" cy="65.400" r="1.100" fill="#9a1c1c"/><path d="M161.700 66.600h3.800l1 5.400q-0.200 0.900-2.200 0.700q-1.400-0.200-1.500-1z" fill="#ededed" stroke="#c4c4c4" stroke-width="0.500"/><path d="M166 60.200l8.600-3.800v13.800l-8.600-3.600z" fill="#e9e9e9" stroke="#cfcfcf" stroke-width="0.400"/><ellipse cx="174.900" cy="63.300" rx="1.300" ry="7" fill="#f6f6f6" stroke="#d3d3d3" stroke-width="0.500"/><path d="M160.800 60.200h5.400v6.600h-5.400q-1.800-0.300-1.800-3.300t1.800-3.300z" fill="#e24545"/><path d="M205 56.200l3.400 4.600" stroke="#d9a362" stroke-width="2.800" stroke-linecap="round"/><path d="M207.800 64.200l3.800-2.600l7.400 7q-2.800 3.200-6.600 4q-3.200-0.400-4.600-1.800z" fill="#f1d422" stroke="#dcbc1a" stroke-width="0.500"/><path d="M206.800 62.400l4.200-2.800l1.400 2l-4.200 2.800z" fill="#d22f2f"/><path d="M255 57.600h5.600l3.700 3.800l3.700-3.800h5.600l-6.500 6.600l6.500 6.800h-5.600l-3.700-4l-3.700 4h-5.600l6.500-6.800z" fill="url(#gx)" stroke="#6c9732" stroke-width="0.500"/><rect x="301.400" y="58.400" width="17" height="11.800" rx="1" fill="#fdfdfd" stroke="#8d8d8d" stroke-width="0.900"/><circle cx="307.600" cy="70.300" r="1.350" fill="#e03030"/><circle cx="311.500" cy="70.300" r="1.350" fill="#30b040"/><text x="309.900" y="67.500" font-family="'Liberation Serif',serif" font-size="8.600" font-weight="bold" fill="#3a3a3a" text-anchor="middle" letter-spacing="-0.700">VST</text><path d="M358.200 60.200l3.600-3.200v1.800h1.600q3 0.200 3 2.600t-3 2.600h-3.400v-2h-1.800z" fill="#35b72f" stroke="#1f8a1c" stroke-width="0.400"/><g transform="translate(355.500 64.600)"><path d="M0 4.400h1.600q0.800 0 0.900-1.600t0.900 0.200l0.400 3.800q0.500 1.600 0.900-0.200l0.600-5.600q0.500-1.800 1 0l0.600 6.200q0.400 1.600 0.900 0l0.500-4.400q0.500-1.500 0.900 0.200t0.900 1.400h1.800" fill="none" stroke="#6d92d4" stroke-width="0.900"/></g><path d="M405.600 56h3.800v1.800h1.900l-3.800 3.400l-3.800-3.400h1.900z" fill="#35b72f" stroke="#1f8a1c" stroke-width="0.400"/><path d="M405.600 73.200h3.800v-1.800h1.900l-3.800-3.400l-3.800 3.400h1.900z" fill="#35b72f" stroke="#1f8a1c" stroke-width="0.400"/><path d="M401.600 61.800h12M401.600 68h12" stroke="#93d593" stroke-width="1.200"/><g transform="translate(401.600 62.200) scale(0.920 0.620)"><path d="M0 4.400h1.600q0.800 0 0.900-1.600t0.900 0.200l0.400 3.800q0.500 1.600 0.900-0.200l0.600-5.600q0.500-1.800 1 0l0.600 6.200q0.400 1.600 0.900 0l0.500-4.400q0.500-1.500 0.900 0.200t0.900 1.400h1.800" fill="none" stroke="#6d92d4" stroke-width="0.900"/></g><rect x="455.200" y="55.800" width="17.800" height="17.800" rx="0.800" fill="#2d3448"/><g fill="none" clip-path="url(#sq)"><circle cx="455.2" cy="55.8" r="8" stroke="#3b92d2" stroke-width="1.200"/><circle cx="455.2" cy="55.8" r="6" stroke="#2fa04a" stroke-width="1"/><circle cx="455.2" cy="55.8" r="4" stroke="#2fa04a" stroke-width="0.900"/></g><g fill="none" clip-path="url(#sq)"><circle cx="473" cy="55.8" r="8" stroke="#3b92d2" stroke-width="1.200"/><circle cx="473" cy="55.8" r="6" stroke="#2fa04a" stroke-width="1"/><circle cx="473" cy="55.8" r="4" stroke="#2fa04a" stroke-width="0.900"/></g><g fill="none" clip-path="url(#sq)"><circle cx="455.2" cy="73.6" r="8" stroke="#3b92d2" stroke-width="1.200"/><circle cx="455.2" cy="73.6" r="6" stroke="#2fa04a" stroke-width="1"/><circle cx="455.2" cy="73.6" r="4" stroke="#2fa04a" stroke-width="0.900"/></g><g fill="none" clip-path="url(#sq)"><circle cx="473" cy="73.6" r="8" stroke="#3b92d2" stroke-width="1.200"/><circle cx="473" cy="73.6" r="6" stroke="#2fa04a" stroke-width="1"/><circle cx="473" cy="73.6" r="4" stroke="#2fa04a" stroke-width="0.900"/></g><circle cx="519.500" cy="64" r="8.400" fill="url(#gg)"/><path d="M513.400 60.400q1.600-3 4.600-3.200q1.600 0.800 0.600 2.200q-1.800 0.600-2 2.400q-1.600 1.200-3.200-1.400z" fill="#f3f6fb"/><path d="M524 57.600q3 1.600 3.600 5q-1.600-1-2.400-2.400z" fill="#dfe8f8"/><path d="M521.400 66.300l6 5.600l0.200 1.500h-1.700l-0.500-1.100h-1.100l-0.300-1.200h-1.200l-2.700-2.700z" fill="#f0e11c" stroke="#b9a90f" stroke-width="0.400"/><circle cx="520.300" cy="65.400" r="3.100" fill="#f3e520" stroke="#b9a90f" stroke-width="0.400"/><circle cx="519.400" cy="64.500" r="0.900" fill="#6a6a20"/><path d="M997 59.200v-2.200q0.100-1.700 1.800-1.800h4q1.700 0.100 1.800 1.800v2.200" fill="none" stroke="#77789a" stroke-width="1.300"/><rect x="992.800" y="59.200" width="15.800" height="11.400" rx="1.600" fill="#fbfbfb" stroke="#777" stroke-width="1"/><path d="M992.800 63.600h15.800" stroke="#b9b9b9" stroke-width="0.600"/><rect x="999.900" y="62" width="1.800" height="4.400" rx="0.800" fill="#d8d8d8" stroke="#8a8a8a" stroke-width="0.500"/><g transform="translate(1002.200 66.600)"><path d="M0 2.200h4v-2.200l4.200 3.600-4.200 3.600v-2.200h-4z" fill="#35b72f" stroke="#1f8a1c" stroke-width="0.500"/></g><rect x="907" y="35.300" width="12" height="12" rx="0.800" fill="url(#gfb)"/><rect x="922" y="35.300" width="12" height="12" fill="#1da1f2"/><circle cx="943" cy="41.300" r="6" fill="#d9473c"/><rect x="952" y="35.300" width="12" height="12" rx="1.200" fill="#ee6b36"/><rect x="967" y="35.300" width="12" height="12" rx="0.800" fill="#2e7fb6"/><text x="914.800" y="47.800" font-family="'Liberation Sans',sans-serif" font-size="14" font-weight="bold" fill="#fff" text-anchor="middle">f</text><path d="M924.300 44.300q3.400 1.500 5.800-0.400q2-1.700 1.900-4.400l1-1.100l-1.200 0.300l0.900-1.200l-1.300 0.500q-1.700-1.400-3.100 0.200q-0.500 0.800-0.300 1.600q-2.400-0.200-3.800-2q-0.800 1.600 0.600 2.700l-0.900-0.200q0.100 1.500 1.500 2l-0.800 0.100q0.500 1.200 1.800 1.300q-0.900 0.700-2.100 0.600z" fill="#fff"/><text x="942.700" y="43.800" font-family="'Liberation Sans',sans-serif" font-size="7" font-weight="bold" fill="#fff" text-anchor="middle" letter-spacing="-0.300">G+</text><path d="M954.200 41.600v1.600q0.100 1.600 1.700 1.600t1.700-1.600v-3.400q0-0.500 0.500-0.500t0.500 0.500v0.800l0.800 0.300l0.800-0.300v-0.900q-0.200-1.800-2.100-1.800t-2.100 1.800v3.400q0 0.500-0.500 0.500t-0.500-0.500v-1.500z M958.600 41.700v1.500q0.200 1.800 2.100 1.800t2.100-1.800v-1.600h-1.600v1.600q0 0.500-0.500 0.500t-0.500-0.500v-1.500l-0.800 0.300z" fill="#fff"/><text x="973.200" y="45.300" font-family="'Liberation Sans',sans-serif" font-size="9.400" font-weight="bold" fill="#fff" text-anchor="middle" letter-spacing="-0.200">in</text><path d="M986 43l2.600-2.700 2.600 2.700" stroke="#444" stroke-width="1" fill="none"/><path d="M1013.300 40.200h5.200l-2.600 2.900z" fill="#111"/><circle cx="1001.500" cy="41.300" r="6.100" fill="#e9ebf3" stroke="#b9bdd2" stroke-width="0.600"/><circle cx="1001.500" cy="41.300" r="4.800" fill="#3a5cc2"/><text x="1001.500" y="44.600" font-family="'Liberation Sans',sans-serif" font-size="9" font-weight="bold" fill="#fff" text-anchor="middle">?</text><path d="M13.200 507v13.200l12-6.600z" fill="url(#gd)"/><circle cx="48.200" cy="513.200" r="7" fill="url(#gr)"/><path d="M73.200 507v13.200l12-6.600z" fill="url(#gd)"/><path d="M77 515l5.400 4.800" stroke="#2a2a33" stroke-width="1.500"/><circle cx="74.600" cy="512.500" r="3.700" fill="url(#gl)" stroke="#8a93a8" stroke-width="0.800"/><rect x="102.200" y="507.500" width="12" height="12" fill="url(#gd)"/><path d="M132.600 508h2v10.600h-2z M144 508v10.400l-9.400-5.200z" fill="url(#gd)"/><path d="M168 508v10.400l-8.600-5.200z M176.600 508v10.400l-8.600-5.200z" fill="url(#gd)"/><path d="M190 508v10.400l8.600-5.200z M198.400 508v10.400l8.600-5.200z" fill="url(#gd)"/><path d="M232 508h2v10.600h-2z M222.600 508v10.400l9.400-5.200z" fill="url(#gd)"/><g transform="translate(1012.7 426.7)"><path d="M2.300 2.300l3.900 3.900" stroke="#a8713f" stroke-width="1.500" stroke-linecap="round"/><circle cx="0" cy="0" r="3.300" fill="#d9edf3" stroke="#5a9cad" stroke-width="1.150"/></g><path d="M1010.9000000000001 426.7h3.600" stroke="#2c4a55" stroke-width="0.900"/><path d="M1012.7 424.9v3.600" stroke="#2c4a55" stroke-width="0.900"/><g transform="translate(1012.7 446.09999999999997)"><path d="M2.300 2.300l3.900 3.900" stroke="#a8713f" stroke-width="1.500" stroke-linecap="round"/><circle cx="0" cy="0" r="3.300" fill="#d9edf3" stroke="#5a9cad" stroke-width="1.150"/></g><path d="M1010.9000000000001 446.09999999999997h3.600" stroke="#2c4a55" stroke-width="0.900"/><g transform="translate(973.7 465.4)"><path d="M2.300 2.300l3.900 3.900" stroke="#a8713f" stroke-width="1.500" stroke-linecap="round"/><circle cx="0" cy="0" r="3.300" fill="#d9edf3" stroke="#5a9cad" stroke-width="1.150"/></g><path d="M971.9000000000001 465.4h3.600" stroke="#2c4a55" stroke-width="0.900"/><path d="M973.7 463.59999999999997v3.600" stroke="#2c4a55" stroke-width="0.900"/><g transform="translate(993.2 465.4)"><path d="M2.300 2.300l3.900 3.900" stroke="#a8713f" stroke-width="1.500" stroke-linecap="round"/><circle cx="0" cy="0" r="3.300" fill="#d9edf3" stroke="#5a9cad" stroke-width="1.150"/></g><path d="M991.4000000000001 465.4h3.600" stroke="#2c4a55" stroke-width="0.900"/><g transform="translate(1012.7 465.4)"><path d="M2.300 2.300l3.900 3.900" stroke="#a8713f" stroke-width="1.500" stroke-linecap="round"/><circle cx="0" cy="0" r="3.300" fill="#d9edf3" stroke="#5a9cad" stroke-width="1.150"/></g></svg>
</body></html>
